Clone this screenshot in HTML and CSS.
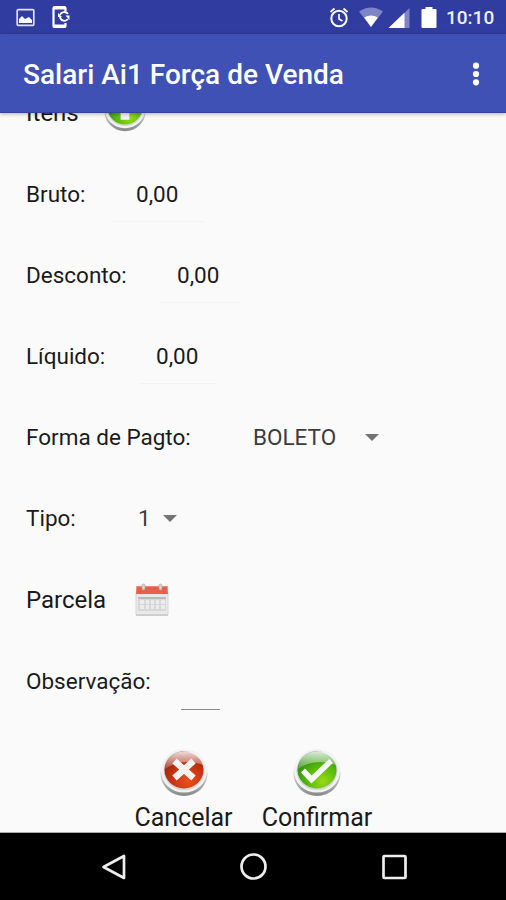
FILE: index.html
```html
<!DOCTYPE html>
<html lang="pt-BR">
<head>
    <meta charset="UTF-8">
    <meta name="viewport" content="width=device-width, initial-scale=1.0">
    <title>Salari Ai1 Força de Venda</title>
    <link rel="stylesheet" href="styles.css">
</head>
<body>
    <div class="screen">
        <div class="status-bar">
            <svg class="status-left" width="60" height="34" viewBox="0 0 60 34">
                <rect x="5.2" y="9.7" width="16.6" height="15.6" rx="1" fill="none" stroke="#dfe2f5" stroke-width="1.7"/>
                <path d="M7 23v-4l3-3 3 3 4-2 3 3v3z" fill="#fff"/>
                <path d="M53.500 11V8.500q0-1.500-1.500-1.500h-9q-1.500 0-1.500 1.500v17q0 1.500 1.500 1.500h9q1.500 0 1.500-1.500V23" fill="none" stroke="#fff" stroke-width="2.200"/>
                <path d="M41.500 8h12M41.500 26h12" stroke="#fff" stroke-width="3"/>
                <path d="M48 15a4.500 4.500 0 0 1 8-1M48 17a4.500 4.500 0 0 0 8 2" fill="none" stroke="#fff" stroke-width="1.800"/>
                <path d="M46 13v4h4zM57.500 20v-4.500h-4z" fill="#fff"/>
            </svg>
            <div class="status-right">
                <svg width="110" height="34" viewBox="0 0 110 34">
                    <circle cx="10" cy="18.500" r="7.700" fill="none" stroke="#fff" stroke-width="2"/>
                    <path d="M10 14v5l3.500 2M1.500 12l4-3.500M18.500 12l-4-3.500" fill="none" stroke="#fff" stroke-width="1.700"/>
                    <path d="M30 11.500Q42 3.500 54 11.500L42 27z" fill="#7d85c7"/>
                    <path d="M35.200 17.500Q42 13.500 48.800 17.500L42 27z" fill="#fff"/>
                    <path d="M80.500 8v20H59.500z" fill="#7d85c7"/>
                    <path d="M75.500 12.700V28h-16z" fill="#fff"/>
                    <path d="M96.500 7h7v2h3q1 0 1 1v17q0 1-1 1h-13q-1 0-1-1V10q0-1 1-1h3z" fill="#fff"/>
                </svg>
                <span class="clock">10:10</span>
            </div>
        </div>

        <div class="app-bar">
            <h1>Salari Ai1 Força de Venda</h1>
            <svg class="menu" width="8" height="26" viewBox="0 0 8 26">
                <g fill="#fff">
                    <circle cx="4" cy="4.700" r="3.100"/>
                    <circle cx="4" cy="13" r="3.100"/>
                    <circle cx="4" cy="21.300" r="3.100"/>
                </g>
            </svg>
        </div>

        <div class="content">
            <div class="form">
                <div class="row">
                    <span class="label label-itens">Itens</span>
                    <svg class="icon-itens" width="42" height="44" viewBox="0 0 48 50">
                        <use href="#ring"/>
                        <ellipse cx="24" cy="22" rx="19.500" ry="18.500" fill="url(#green)"/>
                        <path d="M24 10l10 11h-5v14H19V21h-5z" fill="#f4f4f4"/>
                    </svg>
                </div>
                <div class="row">
                    <span class="label label-bruto">Bruto:</span>
                    <span class="field field-bruto">0,00</span>
                </div>
                <div class="row">
                    <span class="label label-desconto">Desconto:</span>
                    <span class="field field-desconto">0,00</span>
                </div>
                <div class="row">
                    <span class="label label-liquido">Líquido:</span>
                    <span class="field field-liquido">0,00</span>
                </div>
                <div class="row">
                    <span class="label label-forma">Forma de Pagto:</span>
                    <span class="select select-forma">BOLETO</span>
                    <span class="arrow"></span>
                </div>
                <div class="row">
                    <span class="label label-tipo">Tipo:</span>
                    <span class="select select-tipo">1</span>
                    <span class="arrow"></span>
                </div>
                <div class="row row-parcela">
                    <span class="label label-parcela">Parcela</span>
                    <svg width="34" height="34" viewBox="0 0 34 34">
                        <rect x="1" y="10" width="32" height="22.500" rx="1" fill="#e9e9e9" stroke="#d8d8d8"/>
                        <rect x="3" y="14" width="28" height="14" fill="#d6d7d9"/>
                        <path d="M3 15h28" stroke="#b5b7bb" stroke-width="1.800"/>
                        <g fill="#ececec">
                            <path d="M5 17h4v4H5zM11 17h3v4h-3zM16 17h3v4h-3zM21 17h3v4h-3zM26 17h4v4h-4z"/>
                            <path d="M5 22h4v4H5zM11 22h3v4h-3zM16 22h3v4h-3zM21 22h3v4h-3zM26 22h4v4h-4z"/>
                        </g>
                        <path d="M1 32h32" stroke="#c8c8c8" stroke-width="1.500"/>
                        <path d="M1.500 3h31l.5 8H1z" fill="#e85f4b"/>
                        <path d="M1.500 3.500h31" stroke="#f08a7c"/>
                        <g fill="#d9d4d0" stroke="#aaa19d" stroke-width=".6">
                            <rect x="7" y="1" width="3" height="6" rx="1.500"/>
                            <rect x="24" y="1" width="3" height="6" rx="1.500"/>
                        </g>
                    </svg>
                </div>
                <div class="row row-obs">
                    <span class="label label-obs">Observação:</span>
                    <span class="field field-obs"></span>
                </div>
            </div>

            <div class="actions">
                <div class="action cancel">
                    <svg width="48" height="50" viewBox="0 0 48 50">
                        <defs>
                            <linearGradient id="metal" x1="0" y1="0" x2="0" y2="1">
                                <stop offset="0" stop-color="#e4e4e4"/>
                                <stop offset=".6" stop-color="#c6c8c8"/>
                                <stop offset="1" stop-color="#858888"/>
                            </linearGradient>
                            <radialGradient id="red" cx=".6" cy=".8" r=".8">
                                <stop offset="0" stop-color="#e8501c"/>
                                <stop offset=".55" stop-color="#c43212"/>
                                <stop offset="1" stop-color="#8e2012"/>
                            </radialGradient>
                            <radialGradient id="green" cx=".65" cy=".8" r=".8">
                                <stop offset="0" stop-color="#98da11"/>
                                <stop offset=".55" stop-color="#52b50e"/>
                                <stop offset="1" stop-color="#278516"/>
                            </radialGradient>
                            <linearGradient id="shine" x1="0" y1="0" x2="0" y2="1">
                                <stop offset="0" stop-color="#fff" stop-opacity=".85"/>
                                <stop offset="1" stop-color="#fff" stop-opacity=".15"/>
                            </linearGradient>
                            <g id="ring">
                                <ellipse cx="24" cy="25.500" rx="23.500" ry="22.500" fill="url(#metal)"/>
                                <ellipse cx="24" cy="22.800" rx="23" ry="21.800" fill="#f2f2f2"/>
                                <ellipse cx="24" cy="22.500" rx="20.500" ry="19.700" fill="#d3d6d5"/>
                            </g>
                        </defs>
                        <use href="#ring"/>
                        <ellipse cx="24" cy="22" rx="19.500" ry="18.500" fill="url(#red)"/>
                        <path d="M5 21C6 -2 42 -2 43 17 30 12 16 13 5 21z" fill="url(#shine)"/>
                        <path d="M14.500 13l19 17M33.500 13l-19 17" stroke="#f5f2f0" stroke-width="6.500"/>
                    </svg>
                    <span>Cancelar</span>
                </div>
                <div class="action confirm">
                    <svg width="48" height="50" viewBox="0 0 48 50">
                        <use href="#ring"/>
                        <ellipse cx="24" cy="22" rx="19.500" ry="18.500" fill="url(#green)"/>
                        <path d="M5 21C6 -2 42 -2 43 17 30 12 16 13 5 21z" fill="url(#shine)"/>
                        <path d="M10 22.500l8.500 9L38 13" fill="none" stroke="#f7f7f5" stroke-width="5.500"/>
                    </svg>
                    <span>Confirmar</span>
                </div>
            </div>
        </div>

        <div class="nav-bar">
            <svg width="30" height="30" viewBox="0 0 30 30">
                <path d="M24 4v22L3.500 15z" fill="none" stroke="#eee" stroke-width="2.700" stroke-linejoin="round"/>
            </svg>
            <svg width="30" height="30" viewBox="0 0 30 30">
                <circle cx="13.500" cy="14.500" r="12" fill="none" stroke="#eee" stroke-width="2.700"/>
            </svg>
            <svg width="30" height="30" viewBox="0 0 30 30">
                <rect x="4.500" y="4" width="22" height="22" rx="1" fill="none" stroke="#eee" stroke-width="2.700"/>
            </svg>
        </div>
    </div>
</body>
</html>
```

FILE: styles.css
```css
body {
    margin: 0;
    font-family: Roboto, "Liberation Sans", sans-serif;
    color: #1a1a1a;
}

svg {
    display: block;
    flex-shrink: 0;
}

.screen {
    display: flex;
    flex-direction: column;
    width: 506px;
    height: 900px;
    overflow: hidden;
    background-color: #fafafa;
}

.status-bar {
    display: flex;
    justify-content: space-between;
    height: 34px;
    flex-shrink: 0;
    padding: 0 11px 0 12px;
    background-color: #303c9f;
}

.status-right {
    display: flex;
    align-items: center;
    gap: 7px;
}

.clock {
    width: 49px;
    padding-top: 2px;
    font-size: 19px;
    font-weight: 500;
    line-height: 34px;
    white-space: nowrap;
    color: #eef0fb;
}

.app-bar {
    display: flex;
    align-items: center;
    justify-content: space-between;
    height: 79px;
    flex-shrink: 0;
    box-sizing: border-box;
    padding: 2px 26px 0 23px;
    background-color: #3f51b5;
    border-bottom: 1px solid #34439b;
    box-shadow: 0 1px 4px rgba(0, 0, 0, 0.3);
    z-index: 1;
}

h1 {
    margin: 0;
    font-size: 28px;
    font-weight: 500;
    color: #fff;
    white-space: nowrap;
}

.content {
    flex: 1;
    min-height: 0;
    overflow: hidden;
    border-bottom: 1px solid #aaa;
    box-sizing: border-box;
}

/* scrolled so that the first row is half under the app bar */
.form {
    margin-top: -40px;
    padding-left: 26px;
}

.row {
    display: flex;
    align-items: center;
    height: 81px;
    font-size: 22.5px;
    white-space: nowrap;
}

.row-parcela,
.row-obs {
    height: 82px;
}

.icon-itens {
    margin-left: 27px;
    margin-top: -6px;
}

.label {
    flex-shrink: 0;
    padding-bottom: 2px;
}

.label-itens {
    width: 51px;
    font-size: 24px;
}

.label-bruto {
    width: 59px;
}

.label-desconto {
    width: 100px;
}

.label-liquido {
    width: 79px;
}

.label-forma {
    width: 165px;
}

.label-tipo {
    width: 50px;
}

.label-parcela {
    width: 109px;
    padding-bottom: 0;
    font-size: 24px;
}

.label-obs {
    width: 124px;
}

.field {
    height: 54px;
    line-height: 52px;
    box-sizing: border-box;
    border-bottom: 1px solid #f3f3f3;
}

.field-bruto {
    width: 91px;
    margin-left: 28px;
    padding-left: 23px;
}

.field-desconto {
    width: 80px;
    margin-left: 34px;
    padding-left: 17px;
}

.field-liquido {
    width: 76px;
    margin-left: 35px;
    padding-left: 16px;
}

.field-obs {
    width: 39px;
    height: 56px;
    margin-left: 31px;
    border-bottom: 1px solid #8c8c8c;
}

.select {
    padding-bottom: 2px;
    color: #3c3c3c;
}

.select-forma {
    width: 112px;
    margin-left: 62px;
}

.select-tipo {
    width: 25px;
    margin-left: 62px;
}

.arrow {
    border: 7px solid transparent;
    border-top-color: #737373;
    border-bottom: 0;
}

.actions {
    display: flex;
    gap: 28px;
    padding: 25px 0 0 134px;
}

.action {
    display: flex;
    flex-direction: column;
    align-items: center;
    gap: 5px;
    font-size: 25px;
    line-height: 30px;
}

.cancel {
    width: 99px;
}

.confirm {
    width: 112px;
}

.nav-bar {
    display: flex;
    justify-content: space-between;
    align-items: center;
    height: 67px;
    flex-shrink: 0;
    box-sizing: border-box;
    padding: 0 97px 0 100px;
    background-color: #000;
}
```
